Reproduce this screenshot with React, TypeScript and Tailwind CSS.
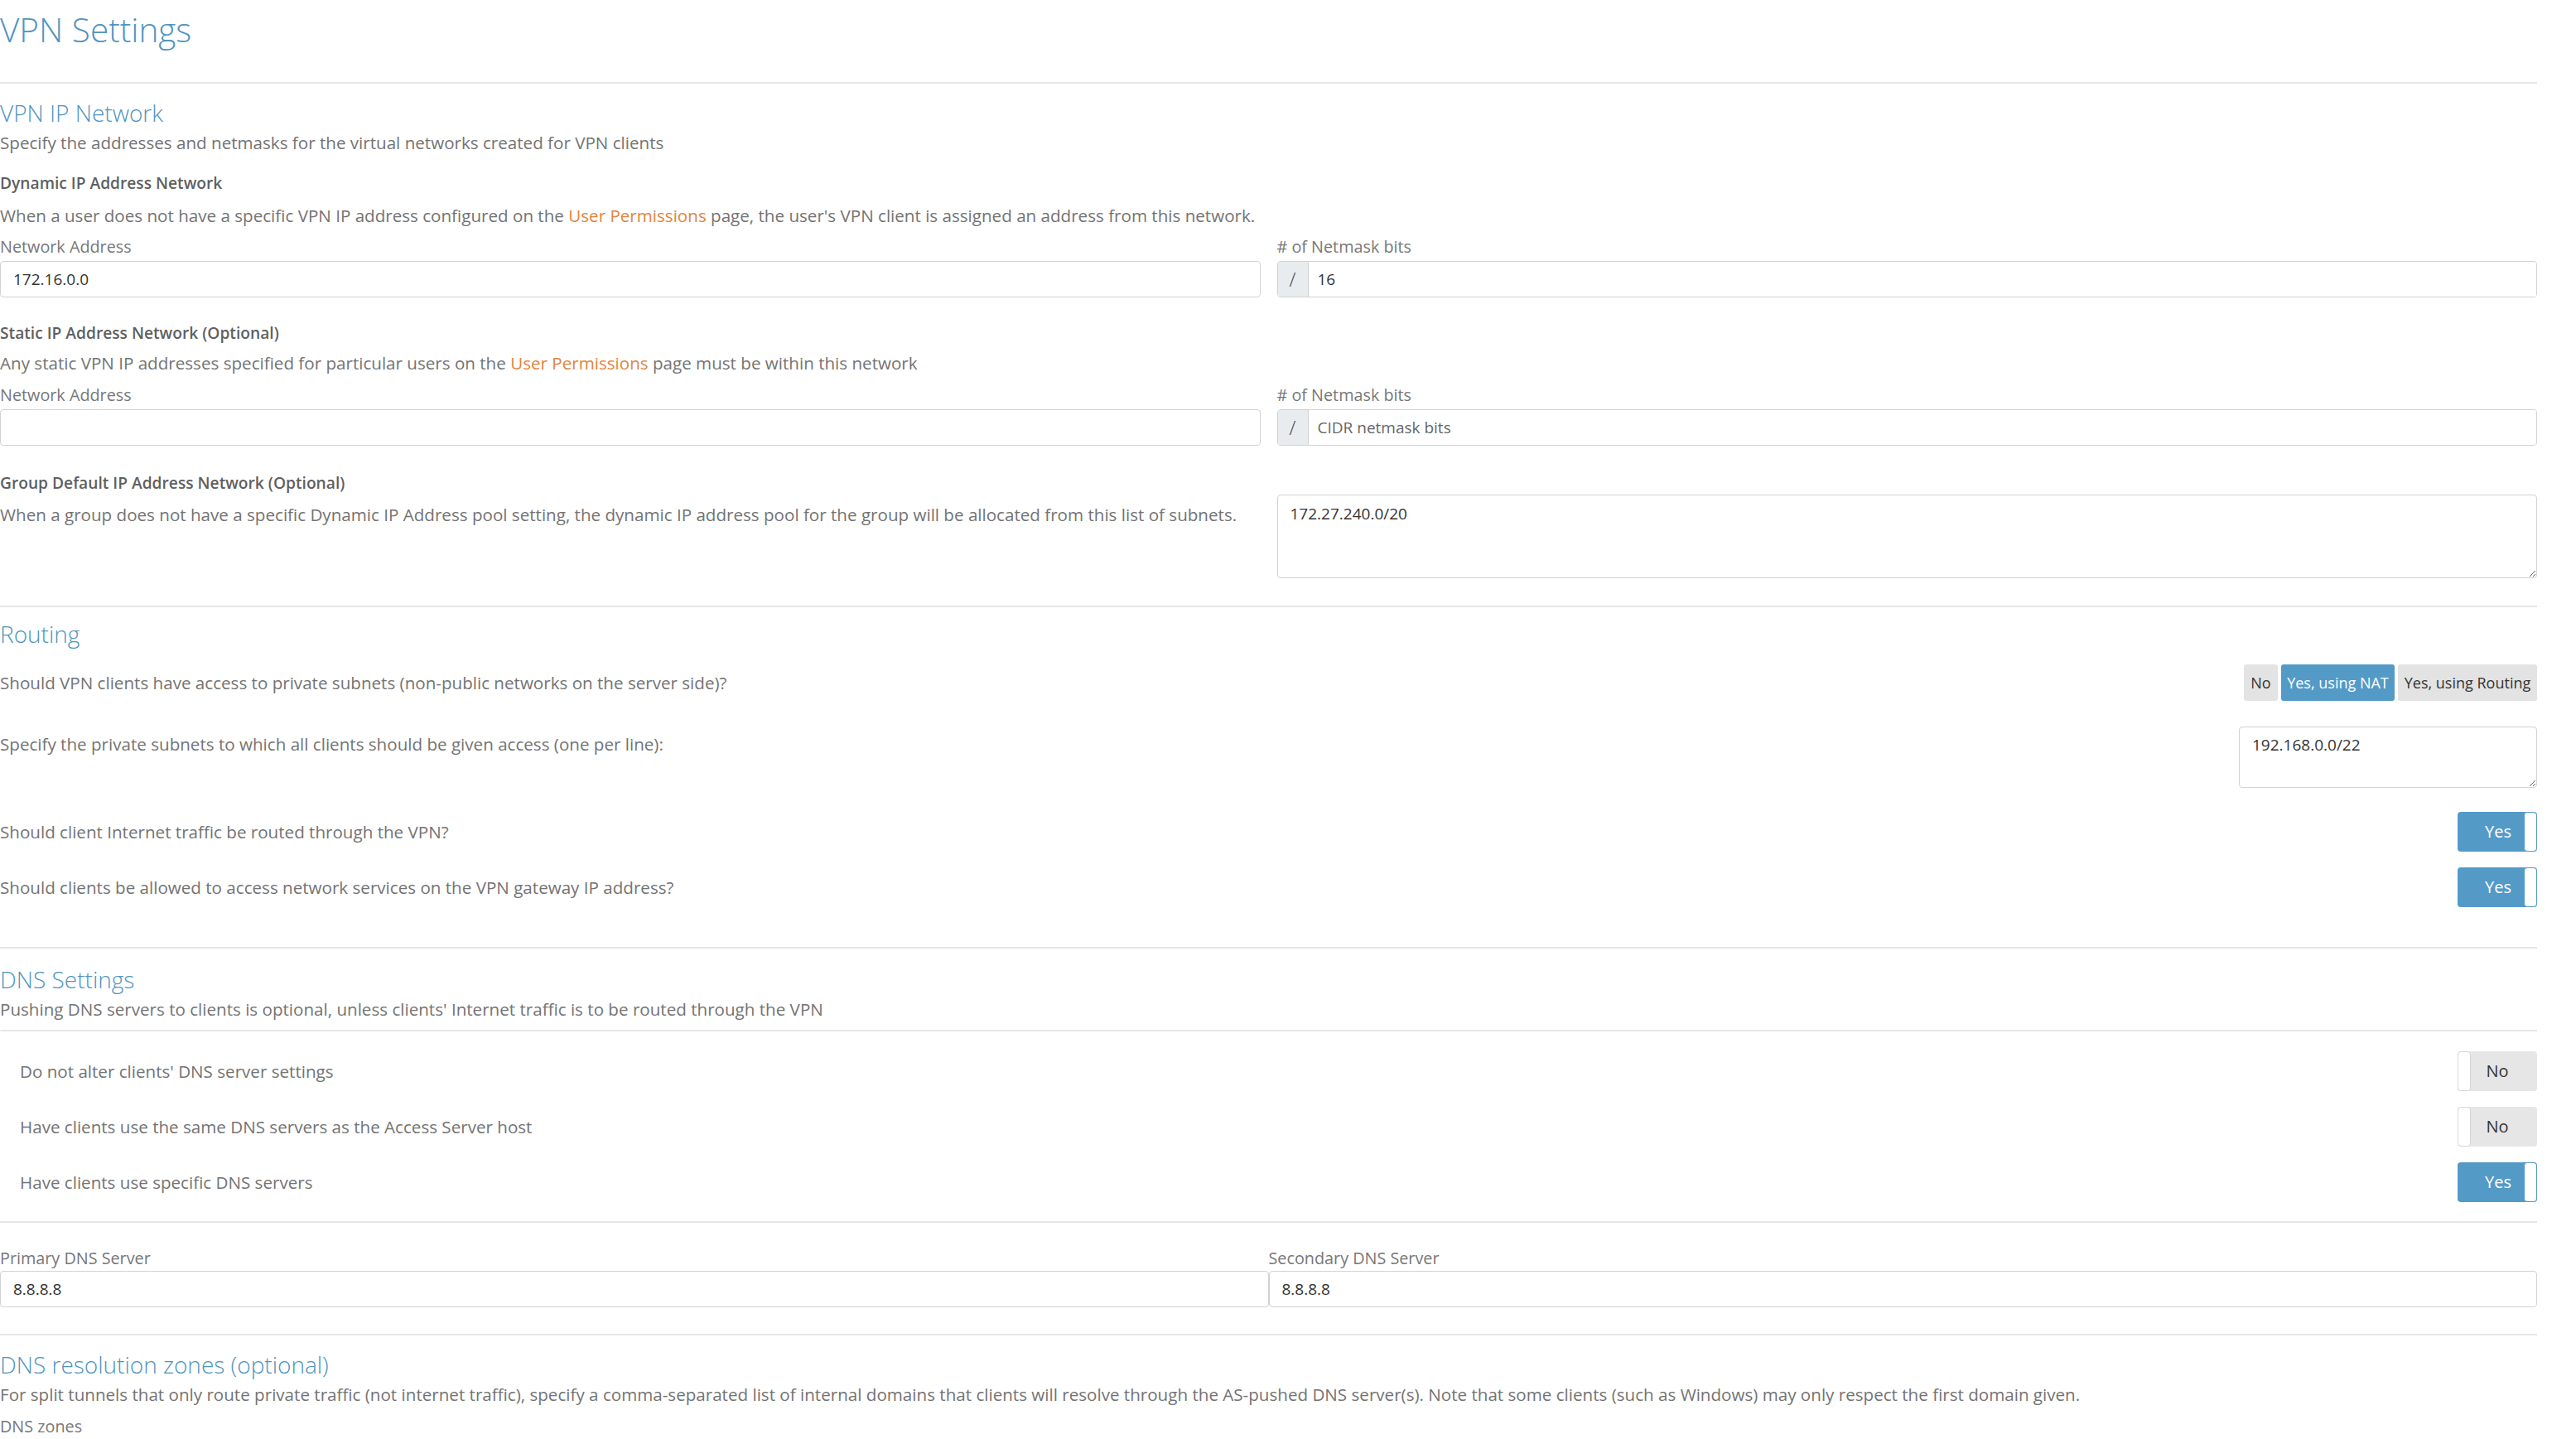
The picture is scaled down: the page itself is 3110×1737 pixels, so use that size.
import React from "react";

const BLUE = "text-[#4f94c0]";

function Hr({ className = "" }: { className?: string }) {
  return <div className={`h-[2px] bg-[#e6e6e6] ${className}`} />;
}

function Label({ children }: { children: React.ReactNode }) {
  return <div className="leading-[30px] text-[19.8px] text-[#777777]">{children}</div>;
}

function TextInput({ value, placeholder }: { value?: string; placeholder?: string }) {
  return (
    <input
      readOnly
      defaultValue={value}
      placeholder={placeholder}
      className="block w-full h-[44px] border border-[#d2d2d2] rounded-[4px] px-[15px] text-[19px] text-[#333333] placeholder:text-[#777777] bg-white outline-none"
    />
  );
}

function SlashInput({ value, placeholder }: { value?: string; placeholder?: string }) {
  return (
    <div className="flex h-[44px] border border-[#d2d2d2] rounded-[4px] overflow-hidden bg-white">
      <div className="w-[37px] shrink-0 bg-[#e9ecef] border-r border-[#d2d2d2] flex items-center justify-center text-[23px] font-light text-[#444444]">
        /
      </div>
      <input
        readOnly
        defaultValue={value}
        placeholder={placeholder}
        className="flex-1 min-w-0 px-[11px] text-[19px] text-[#333333] placeholder:text-[#666666] outline-none bg-white"
      />
    </div>
  );
}

function Toggle({ on }: { on: boolean }) {
  if (on) {
    return (
      <div className="w-[96px] h-[48px] shrink-0 rounded-[4px] bg-[#549ac7] flex items-stretch">
        <span className="flex-1 flex items-center justify-center pl-[18px] text-white text-[20px]">Yes</span>
        <span className="w-[16px] bg-white rounded-[4px] border border-[#549ac7]" />
      </div>
    );
  }
  return (
    <div className="w-[96px] h-[48px] shrink-0 rounded-[4px] bg-[#e6e6e6] flex items-stretch">
      <span className="w-[16px] bg-white rounded-[4px] border border-[#d6d6d6]" />
      <span className="flex-1 flex items-center justify-center pr-[16px] text-[#333333] text-[20px]">No</span>
    </div>
  );
}

function Segmented() {
  return (
    <div className="flex gap-[4px] h-[44px] shrink-0">
      <div className="w-[41px] rounded-[3px] bg-[#e3e3e3] flex items-center justify-center text-[18px] text-[#333333]">No</div>
      <div className="w-[137px] rounded-[3px] bg-[#549ac7] flex items-center justify-center text-[18px] text-white">
        Yes, using NAT
      </div>
      <div className="w-[168px] rounded-[3px] bg-[#e3e3e3] flex items-center justify-center text-[18px] text-[#333333]">
        Yes, using Routing
      </div>
    </div>
  );
}

function Link({ children }: { children: React.ReactNode }) {
  return <span className="text-[#e2843d]">{children}</span>;
}

function DnsRow({ text, on, className = "" }: { text: string; on: boolean; className?: string }) {
  return (
    <div className={`flex items-center justify-between ${className}`}>
      <span className="pl-[24px] leading-[36px]">{text}</span>
      <Toggle on={on} />
    </div>
  );
}

const H3 = "leading-[36px] text-[19.2px] font-semibold text-[#5f5f5f]";
const H2 = `text-[28px] leading-[36px] font-light ${BLUE}`;

export default function App() {
  return (
    <div className="w-[3063px] bg-white font-['Open_Sans',sans-serif] text-[20.6px] text-[#737373]">
      <h1 className={`text-[40.5px] leading-[72px] font-light ${BLUE}`}>VPN Settings</h1>
      <Hr className="mt-[27px]" />

      {/* VPN IP Network */}
      <h2 className={`mt-[17px] ${H2}`}>VPN IP Network</h2>
      <p className="leading-[36px]">Specify the addresses and netmasks for the virtual networks created for VPN clients</p>

      <h3 className={`mt-[13px] ${H3}`}>Dynamic IP Address Network</h3>
      <p className="mt-[3px] leading-[36px]">
        When a user does not have a specific VPN IP address configured on the <Link>User Permissions</Link> page, the
        user's VPN client is assigned an address from this network.
      </p>
      <div className="mt-[5px] grid grid-cols-2 gap-x-[20px]">
        <div>
          <Label>Network Address</Label>
          <div className="mt-[2px]">
            <TextInput value="172.16.0.0" />
          </div>
        </div>
        <div>
          <Label># of Netmask bits</Label>
          <div className="mt-[2px]">
            <SlashInput value="16" />
          </div>
        </div>
      </div>

      <h3 className={`mt-[25px] ${H3}`}>Static IP Address Network (Optional)</h3>
      <p className="leading-[36px]">
        Any static VPN IP addresses specified for particular users on the <Link>User Permissions</Link> page must be
        within this network
      </p>
      <div className="mt-[6px] grid grid-cols-2 gap-x-[20px]">
        <div>
          <Label>Network Address</Label>
          <div className="mt-[2px]">
            <TextInput />
          </div>
        </div>
        <div>
          <Label># of Netmask bits</Label>
          <div className="mt-[2px]">
            <SlashInput placeholder="CIDR netmask bits" />
          </div>
        </div>
      </div>

      <div className="mt-[27px] grid grid-cols-2 gap-x-[20px]">
        <div>
          <h3 className={H3}>Group Default IP Address Network (Optional)</h3>
          <p className="mt-[2px] leading-[36px]">
            When a group does not have a specific Dynamic IP Address pool setting, the dynamic IP address pool for the
            group will be allocated from this list of subnets.
          </p>
        </div>
        <div className="pt-[32px]">
          <textarea
            readOnly
            defaultValue="172.27.240.0/20"
            className="block w-full h-[101px] border border-[#d2d2d2] rounded-[4px] px-[15px] pt-[8px] text-[19px] leading-[28px] text-[#333333] outline-none"
          />
        </div>
      </div>

      <Hr className="mt-[33px]" />

      {/* Routing */}
      <h2 className={`mt-[14px] ${H2}`}>Routing</h2>
      <div className="mt-[19px] flex items-center justify-between">
        <span className="leading-[36px]">
          Should VPN clients have access to private subnets (non-public networks on the server side)?
        </span>
        <Segmented />
      </div>
      <div className="mt-[31px] flex items-start justify-between">
        <span className="pt-[3px] leading-[36px]">
          Specify the private subnets to which all clients should be given access (one per line):
        </span>
        <textarea
          readOnly
          defaultValue="192.168.0.0/22"
          className="block w-[360px] h-[74px] border border-[#d2d2d2] rounded-[4px] px-[15px] pt-[7px] text-[19px] leading-[28px] text-[#333333] outline-none"
        />
      </div>
      <div className="mt-[29px] flex items-center justify-between">
        <span className="leading-[36px]">Should client Internet traffic be routed through the VPN?</span>
        <Toggle on />
      </div>
      <div className="mt-[19px] flex items-center justify-between">
        <span className="leading-[36px]">Should clients be allowed to access network services on the VPN gateway IP address?</span>
        <Toggle on />
      </div>

      <Hr className="mt-[48px]" />

      {/* DNS Settings */}
      <h2 className={`mt-[19px] ${H2}`}>DNS Settings</h2>
      <p className="leading-[36px]">
        Pushing DNS servers to clients is optional, unless clients' Internet traffic is to be routed through the VPN
      </p>
      <Hr className="mt-[7px] rounded-tl-[4px]" />
      <DnsRow className="mt-[24px]" text="Do not alter clients' DNS server settings" on={false} />
      <DnsRow className="mt-[19px]" text="Have clients use the same DNS servers as the Access Server host" on={false} />
      <DnsRow className="mt-[19px]" text="Have clients use specific DNS servers" on />

      <Hr className="mt-[23px]" />

      <div className="mt-[28px] grid grid-cols-2">
        <div>
          <Label>Primary DNS Server</Label>
          <TextInput value="8.8.8.8" />
        </div>
        <div>
          <Label>Secondary DNS Server</Label>
          <TextInput value="8.8.8.8" />
        </div>
      </div>

      <Hr className="mt-[32px]" />

      <h2 className={`mt-[17px] ${H2}`}>DNS resolution zones (optional)</h2>
      <p className="leading-[36px]">
        For split tunnels that only route private traffic (not internet traffic), specify a comma-separated list of
        internal domains that clients will resolve through the AS-pushed DNS server(s). Note that some clients (such as
        Windows) may only respect the first domain given.
      </p>
      <div className="mt-[6px]">
        <Label>DNS zones</Label>
        <div className="mt-[2px] pb-[40px]">
          <TextInput />
        </div>
      </div>
    </div>
  );
}
